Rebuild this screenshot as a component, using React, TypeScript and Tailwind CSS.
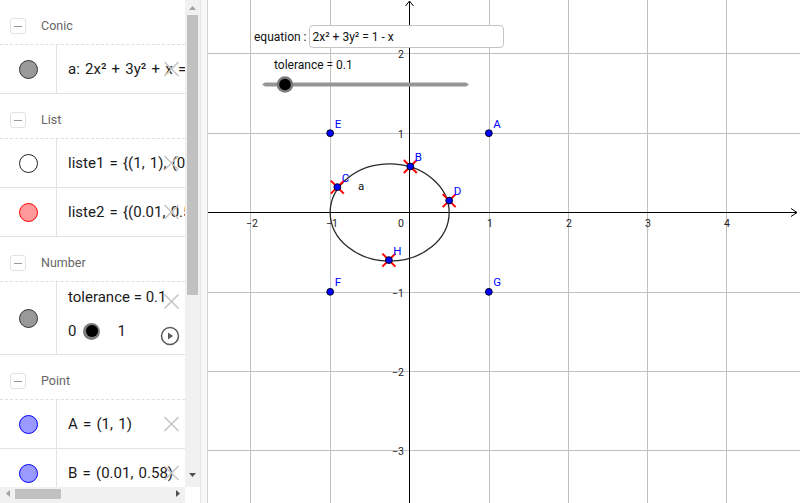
import React from "react";

const U = 79.33;
const X0 = 409.5;
const Y0 = 212.5;
const tx = (v: number) => X0 + v * U;
const ty = (v: number) => Y0 - v * U;

function Cross() {
  return (
    <svg width="17" height="17" viewBox="0 0 17 17" className="block">
      <path d="M1.5 1.5 L15.5 15.5 M15.5 1.5 L1.5 15.5" stroke="#c6c6c6" strokeWidth="1.6" fill="none" />
    </svg>
  );
}

function Dot({ fill, border }: { fill: string; border: string }) {
  return (
    <span
      className="block h-[19px] w-[19px] rounded-full border"
      style={{ background: fill, borderColor: border }}
    />
  );
}

function Header({ label }: { label: string }) {
  return (
    <div className="flex h-[45px] items-center gap-[15px] border-b border-dashed border-[#dedede] pl-[10px] pt-[8px]">
      <span className="flex h-[16px] w-[16px] items-center justify-center rounded-[3px] border border-[#e2e2e2]">
        <span className="block h-px w-[8px] bg-[#9a9a9a]" />
      </span>
      <span className="text-[12.5px] text-[#666]">{label}</span>
    </div>
  );
}

function Row({ fill, border, text }: { fill: string; border: string; text: string }) {
  return (
    <div className="flex h-[49px] border-b border-[#e2e2e2]">
      <div className="flex w-[57px] shrink-0 items-center justify-center border-r border-[#e2e2e2]">
        <Dot fill={fill} border={border} />
      </div>
      <div className="relative flex flex-1 items-center overflow-hidden whitespace-nowrap pl-[11px] text-[15px] text-[#1a1a1a] [word-spacing:1.5px]">
        {text}
        <span className="absolute right-[5px] top-1/2 -translate-y-1/2">
          <Cross />
        </span>
      </div>
    </div>
  );
}

function SliderRow() {
  return (
    <div className="flex h-[73px] border-b border-[#e2e2e2]">
      <div className="flex w-[57px] shrink-0 items-center justify-center border-r border-[#e2e2e2]">
        <Dot fill="#999999" border="#333333" />
      </div>
      <div className="relative flex flex-1 flex-col overflow-hidden whitespace-nowrap pl-[11px] pt-[5px] text-[15px] text-[#1a1a1a]">
        <span className="leading-[20px]">tolerance = 0.1</span>
        <div className="mt-[14px] flex items-center">
          <span className="leading-[20px]">0</span>
          <span className="ml-[7px] flex h-[17px] w-[17px] items-center justify-center rounded-full bg-[#7c7c7c]">
            <span className="block h-[12px] w-[12px] rounded-full bg-black" />
          </span>
          <span className="ml-[17px] leading-[20px]">1</span>
        </div>
        <span className="absolute right-[5px] top-[11px]">
          <Cross />
        </span>
        <span className="absolute right-[5px] top-[44px]">
          <svg width="20" height="20" viewBox="0 0 20 20" className="block">
            <circle cx="10" cy="10" r="8.5" stroke="#5a5a5a" strokeWidth="1.5" fill="none" />
            <path d="M8 6.5 L13 10 L8 13.5 Z" fill="#5a5a5a" />
          </svg>
        </span>
      </div>
    </div>
  );
}

function Tri({ dir, color }: { dir: "up" | "down" | "left" | "right"; color: string }) {
  const d = {
    up: "M0 4 L3.5 0 L7 4 Z",
    down: "M0 0 L7 0 L3.5 4 Z",
    left: "M4 0 L4 7 L0 3.5 Z",
    right: "M0 0 L4 3.5 L0 7 Z",
  }[dir];
  const vertical = dir === "up" || dir === "down";
  return (
    <svg width={vertical ? 7 : 4} height={vertical ? 4 : 7} viewBox={vertical ? "0 0 7 4" : "0 0 4 7"} className="block">
      <path d={d} fill={color} />
    </svg>
  );
}

function AlgebraView() {
  return (
    <div className="flex w-[200px] shrink-0 flex-col">
      <div className="flex h-[487px]">
        <div className="w-[185px] overflow-hidden">
          <Header label="Conic" />
          <Row fill="#999999" border="#333333" text="a: 2x² + 3y² + x = 1" />
          <Header label="List" />
          <Row fill="#ffffff" border="#222222" text="liste1 = {(1, 1), (0.01, 0.58)}" />
          <Row fill="#ff9999" border="#ff0000" text="liste2 = {(0.01, 0.58)}" />
          <Header label="Number" />
          <SliderRow />
          <Header label="Point" />
          <Row fill="#9999ff" border="#0000ff" text="A = (1, 1)" />
          <Row fill="#9999ff" border="#0000ff" text="B = (0.01, 0.58)" />
        </div>
        <div className="flex w-[15px] flex-col bg-[#f1f1f1]">
          <div className="flex h-[15px] items-center justify-center">
            <Tri dir="up" color="#a3a3a3" />
          </div>
          <div className="mx-[2px] h-[280px] bg-[#c1c1c1]" />
          <div className="flex-1" />
          <div className="flex h-[18px] items-start justify-center pt-[4px]">
            <Tri dir="down" color="#505050" />
          </div>
        </div>
      </div>
      <div className="flex h-[16px]">
        <div className="flex w-[185px] items-center bg-[#f1f1f1] pb-[3px]">
          <div className="flex w-[15px] justify-center">
            <Tri dir="left" color="#a3a3a3" />
          </div>
          <div className="h-[10px] w-[46px] bg-[#c1c1c1]" />
          <div className="flex-1" />
          <div className="flex w-[15px] justify-center">
            <Tri dir="right" color="#505050" />
          </div>
        </div>
        <div className="w-[15px] bg-white" />
      </div>
    </div>
  );
}

const gridX = [250, 330, 489, 568, 647, 726];
const gridY = [53, 133, 292, 371, 450];
const xLabels = [
  { v: -2, x: 250 },
  { v: -1, x: 330 },
  { v: 1, x: 489 },
  { v: 2, x: 568 },
  { v: 3, x: 647 },
  { v: 4, x: 726 },
];
const yLabels = [
  { v: 2, y: 53 },
  { v: 1, y: 133 },
  { v: -1, y: 292 },
  { v: -2, y: 371 },
  { v: -3, y: 450 },
];

const points = [
  { n: "A", x: 1, y: 1 },
  { n: "E", x: -1, y: 1 },
  { n: "F", x: -1, y: -1 },
  { n: "G", x: 1, y: -1 },
  { n: "B", x: 0.01, y: 0.58, cross: true },
  { n: "C", x: -0.91, y: 0.32, cross: true },
  { n: "D", x: 0.5, y: 0.15, cross: true },
  { n: "H", x: -0.26, y: -0.6, cross: true },
];

const fmt = (v: number) => (v < 0 ? `\u2212${-v}` : `${v}`);

function GraphicsView() {
  return (
    <div className="relative flex-1 overflow-hidden bg-white">
      <svg width="592" height="503" viewBox="208 0 592 503" className="block font-['Roboto',sans-serif]">
        {gridX.map((x) => (
          <line key={`gx${x}`} x1={x + 0.5} y1={0} x2={x + 0.5} y2={503} stroke="#c0c0c0" strokeWidth="1" />
        ))}
        {gridY.map((y) => (
          <line key={`gy${y}`} x1={208} y1={y + 0.5} x2={800} y2={y + 0.5} stroke="#c0c0c0" strokeWidth="1" />
        ))}
        <line x1={208} y1={212.5} x2={797} y2={212.5} stroke="#000" strokeWidth="1" />
        <path d="M791 208.5 L797 212.5 L791 216.5" stroke="#000" strokeWidth="1" fill="none" />
        <line x1={409.5} y1={1} x2={409.5} y2={503} stroke="#000" strokeWidth="1" />
        <path d="M405.5 6 L409.5 1 L413.5 6" stroke="#000" strokeWidth="1" fill="none" />

        {xLabels.map((l) => (
          <text key={`xl${l.v}`} x={l.x + (l.v < 0 ? 2 : 1)} y={227} fontSize="10.5" textAnchor="middle" fill="#222">
            {fmt(l.v)}
          </text>
        ))}
        {yLabels.map((l) => (
          <text key={`yl${l.v}`} x={404} y={l.y + 4.5} fontSize="10.5" textAnchor="end" fill="#222">
            {fmt(l.v)}
          </text>
        ))}
        <text x={404} y={227} fontSize="10.5" textAnchor="end" fill="#222">
          0
        </text>

        <ellipse cx={tx(-0.25)} cy={Y0} rx={0.75 * U} ry={0.6124 * U} stroke="#2a2a2a" strokeWidth="1.3" fill="none" />
        <text x={358} y={190} fontSize="11.5" fill="#111">
          a
        </text>

        {points.map((p) => {
          const x = tx(p.x);
          const y = ty(p.y);
          return (
            <g key={p.n}>
              {p.cross && (
                <path
                  d={`M${x - 6.5} ${y - 6.5} L${x + 6.5} ${y + 6.5} M${x + 6.5} ${y - 6.5} L${x - 6.5} ${y + 6.5}`}
                  stroke="#ff0000"
                  strokeWidth="2"
                />
              )}
              <circle cx={x} cy={y} r="3.4" fill="#0000ff" stroke="#000022" strokeWidth="1" />
              <text x={x + 4.5} y={y - 5.5} fontSize="11.5" fill="#0000ff">
                {p.n}
              </text>
            </g>
          );
        })}

        <text x={274} y={69} fontSize="12" fill="#111">
          tolerance = 0.1
        </text>
        <path d="M262 84.5 L265 82.5 L466 82.5 L469 84.5 L466 86.5 L265 86.5 Z" fill="#959595" />
        <circle cx={285} cy={84.5} r="8.3" fill="#7a7a7a" />
        <circle cx={285} cy={84.5} r="5.8" fill="#000" />
      </svg>

      <div className="absolute left-[46px] top-[25px] flex items-center gap-[2px] font-['Roboto',sans-serif] text-[12px] text-[#111]">
        <span>equation :</span>
        <div className="flex h-[23px] w-[195px] items-center rounded-[4px] border border-[#c4c4c4] bg-white pl-[3px]">
          2x² + 3y² = 1 - x
        </div>
      </div>
    </div>
  );
}

export default function App() {
  return (
    <div className="flex h-[503px] w-[800px] overflow-hidden bg-white font-['Roboto',sans-serif]">
      <AlgebraView />
      <div className="w-[8px] shrink-0 border-x border-l-[#e6e6e6] border-r-[#d2d2d2] bg-[#f8f8f8]" />
      <GraphicsView />
    </div>
  );
}
